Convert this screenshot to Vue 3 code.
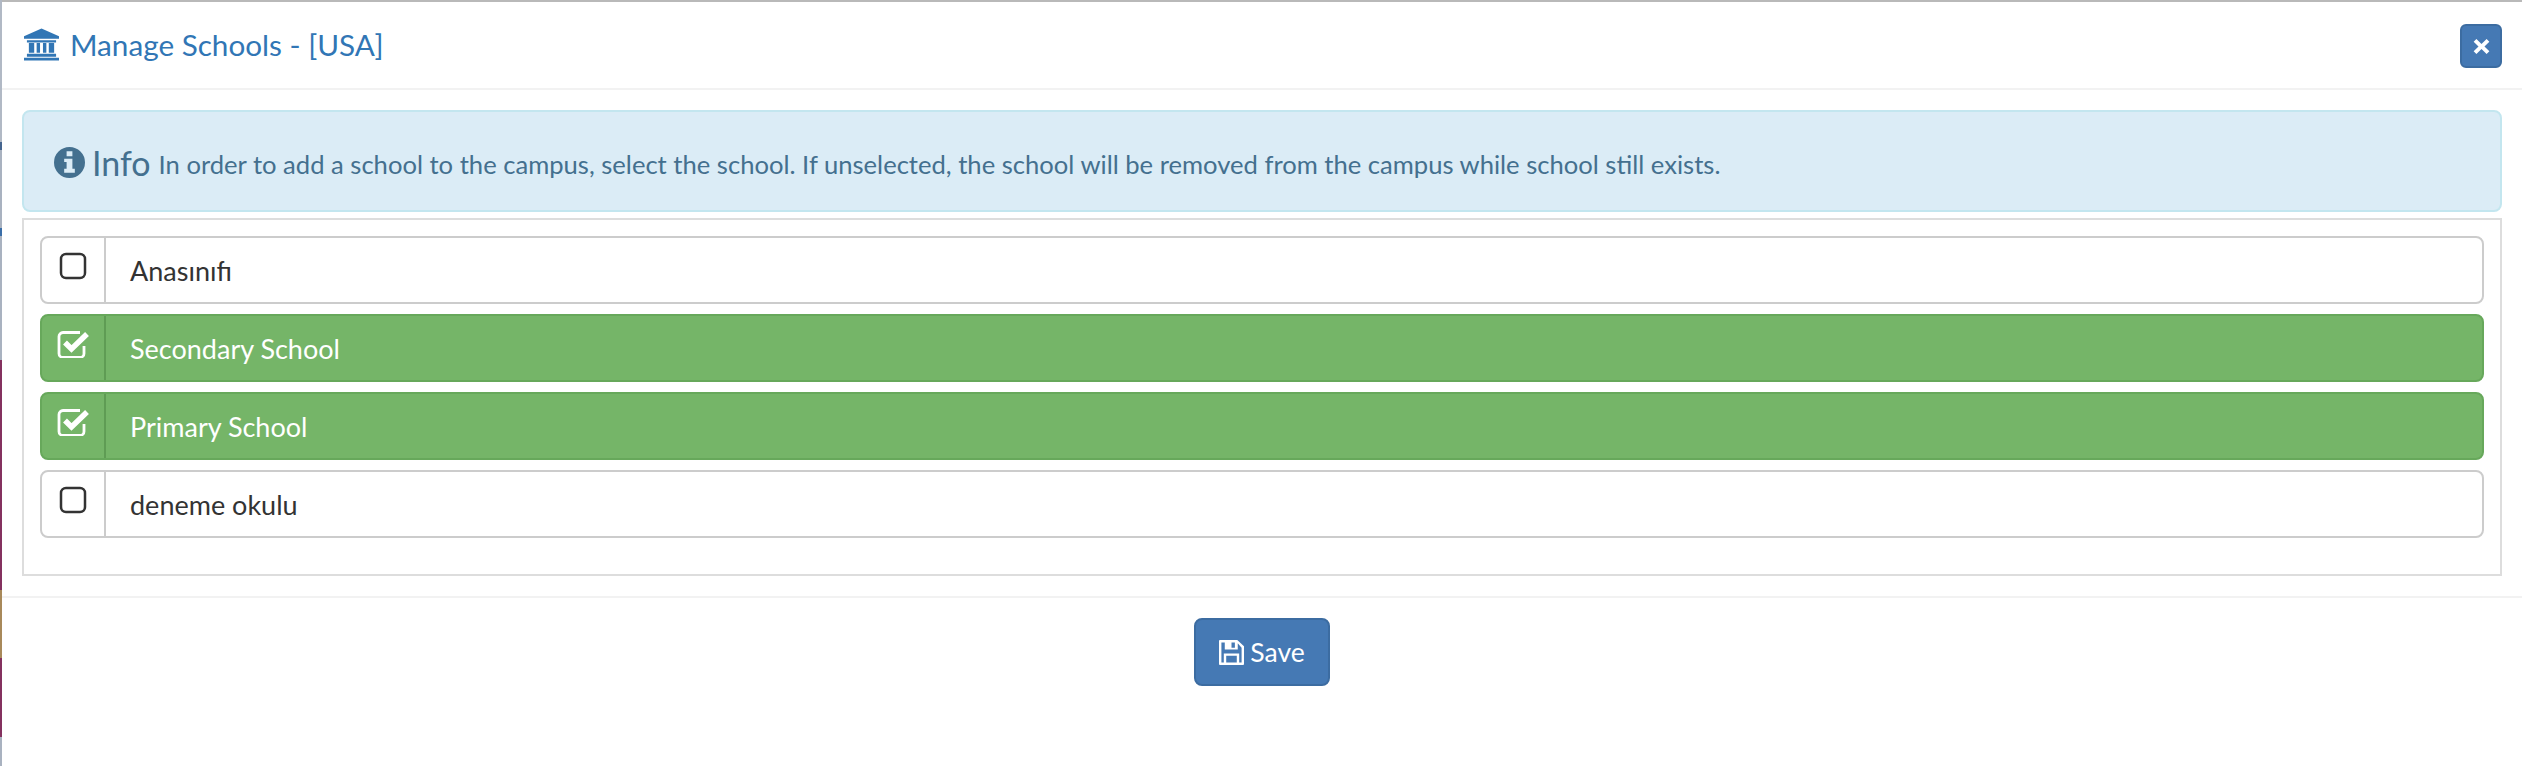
<script setup>
const rows = [
  { name: 'Anasınıfı', on: false },
  { name: 'Secondary School', on: true },
  { name: 'Primary School', on: true },
  { name: 'deneme okulu', on: false },
]
const strip = [
  ['#b1b9c5', 142], ['#45658f', 8], ['#a9b2c0', 78], ['#3a6ea8', 8], ['#a9b2c0', 124],
  ['#84315f', 230], ['#a8895a', 68], ['#84315f', 79], ['#a9b2c0', 29],
]
</script>

<template>
  <div class="page">
    <div class="strip">
      <i v-for="(s, i) in strip" :key="i" :style="{ background: s[0], height: s[1] + 'px' }"></i>
    </div>
    <div class="modal">
      <header class="head">
        <h4 class="title">
          <svg class="bank" viewBox="0 0 36 33" width="35" height="33">
            <path fill="currentColor" d="M18 0 36 8v2.500H0V8zM3 12h30v2.500H3zM5 15h5.500v10H5zM13 15h3.500v10H13zM19.500 15H23v10h-3.500zM25.500 15H31v10h-5.500zM3 26h30v3H3zM0 30h36v3H0z"/>
          </svg>
          <span>Manage Schools - [USA]</span>
        </h4>
        <button class="close" aria-label="Close">
          <svg viewBox="0 0 16 16" width="17" height="17"><path fill="#fff" d="M3.200 1 8 5.600 12.800 1 15.400 3.600 10.800 8l4.600 4.400-2.600 2.600L8 10.400 3.200 15 .6 12.400 5.200 8 .6 3.600z"/></svg>
        </button>
      </header>
      <section class="body">
        <div class="alert">
          <svg class="info" viewBox="0 0 32 32" width="31" height="31">
            <path fill="currentColor" fill-rule="evenodd" d="M16 0a16 16 0 1 1 0 32 16 16 0 0 1 0-32zM13 4.500v5h6v-5zM10.500 12v3.500h2.500v7h-2.500v4h11v-4H19V12z"/>
          </svg>
          <span class="big">Info</span>
          <span class="msg">In order to add a school to the campus, select the school. If unselected, the school will be removed from the campus while school still exists.</span>
        </div>
        <div class="panel">
          <div v-for="r in rows" :key="r.name" class="row" :class="{ on: r.on }">
            <span class="addon">
              <svg v-if="r.on" viewBox="0 0 32 28" width="32" height="28">
                <path fill="none" stroke="#fff" stroke-width="2.800" stroke-linejoin="round" d="M23 2.500H6A4 4 0 0 0 2 6.500v17A4 4 0 0 0 6 27.500h17a4 4 0 0 0 4-4V16"/>
                <path fill="none" stroke="#fff" stroke-width="5.500" d="M8 12.500l6.500 6.500L30 4"/>
              </svg>
              <svg v-else viewBox="0 0 28 28" width="28" height="28">
                <rect x="2" y="2" width="24" height="24" rx="5" fill="none" stroke="#333" stroke-width="2.500"/>
              </svg>
            </span>
            <span class="label">{{ r.name }}</span>
          </div>
        </div>
      </section>
      <footer class="foot">
        <button class="save">
          <svg viewBox="0 0 26 26" width="25" height="25">
            <path fill="#fff" fill-rule="evenodd" d="M1 0h18l7 6.500V25a1 1 0 0 1-1 1H1a1 1 0 0 1-1-1V1a1 1 0 0 1 1-1zM6 2.500H2.500v21H5V14h16v9.500h2.500V8L19.500 3.500v6.500H6zM7.500 23.500h11V16.500h-11zM13 2.500v5.500h3.500V2.500z"/>
          </svg>
          <span>Save</span>
        </button>
      </footer>
    </div>
  </div>
</template>

<style scoped>
.page {
  display: flex;
  width: 2522px;
  height: 766px;
  overflow: hidden;
  font-family: Lato, "Noto Sans", sans-serif;
  background: #fff;
}
.strip { width: 2px; flex: none; display: flex; flex-direction: column; }
.strip i { display: block; flex: none; }
.modal { flex: 1; border-top: 2px solid #b9b9b9; min-width: 0; }
.head {
  height: 86px;
  padding: 0 20px 0 22px;
  display: flex;
  align-items: center;
  justify-content: space-between;
  border-bottom: 2px solid #f2f2f2;
  box-sizing: content-box;
}
.title {
  display: flex;
  align-items: center;
  gap: 11px;
  margin: 0;
  font-size: 29.700px;
  font-weight: 400;
  color: #3176b5;
}
.title span { margin-top: -2px; }
.bank { margin-top: -1px; }
.close {
  width: 42px;
  height: 44px;
  margin-top: 2px;
  padding: 0;
  display: flex;
  align-items: center;
  justify-content: center;
  background: #4579b4;
  border: 2px solid #3c6ca1;
  border-radius: 6px;
}
.body { padding: 20px 20px 20px; }
.alert {
  height: 102px;
  box-sizing: border-box;
  padding: 2px 30px 0;
  display: flex;
  align-items: center;
  background: #dbecf6;
  border: 2px solid #c3e6ef;
  border-radius: 8px;
  color: #44708f;
}
.info { flex: none; margin-right: 7px; }
.big { font-size: 34px; margin-right: 8px; }
.msg { font-size: 25.600px; padding-top: 4px; }
.panel {
  margin-top: 6px;
  height: 358px;
  box-sizing: border-box;
  padding: 16px 16px 0;
  border: 2px solid #ddd;
  display: flex;
  flex-direction: column;
  gap: 10px;
}
.row {
  height: 68px;
  box-sizing: border-box;
  display: flex;
  align-items: stretch;
  border: 2px solid #ccc;
  border-radius: 8px;
  color: #333;
  background: #fff;
}
.row.on { background: #75b568; border-color: #67a85b; color: #fff; }
.addon {
  width: 62px;
  flex: none;
  border-right: 2px solid #ccc;
  display: flex;
  justify-content: center;
  padding-top: 14px;
  box-sizing: content-box;
  height: 50px;
}
.row.on .addon { border-right-color: #5f9c54; }
.label {
  padding-left: 24px;
  display: flex;
  align-items: center;
  font-size: 27px;
}
.foot {
  border-top: 2px solid #f2f2f2;
  display: flex;
  justify-content: center;
  padding-top: 20px;
}
.save {
  width: 136px;
  height: 68px;
  padding: 0;
  display: flex;
  align-items: center;
  justify-content: center;
  gap: 6px;
  font: inherit;
  font-size: 26.500px;
  color: #fff;
  background: #4579b4;
  border: 2px solid #3c6ca1;
  border-radius: 8px;
}
</style>
